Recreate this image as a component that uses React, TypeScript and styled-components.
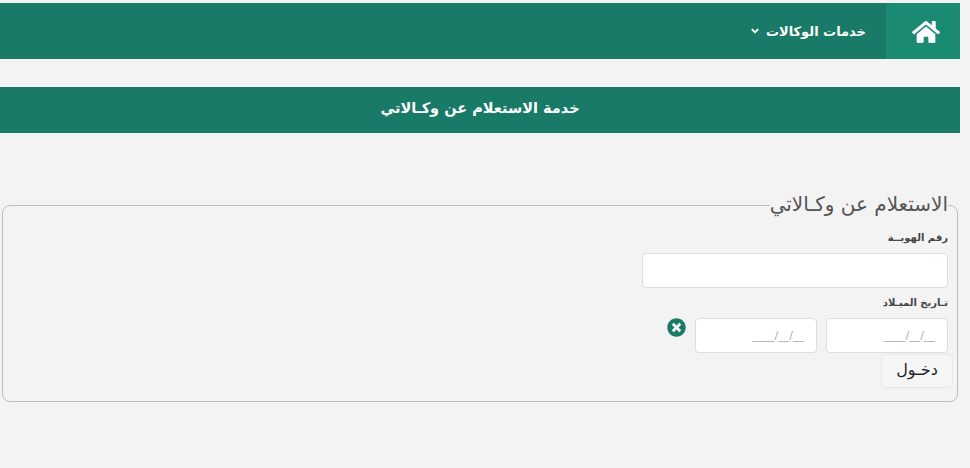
import styled, { createGlobalStyle } from "styled-components";
import { FaAngleDown, FaHome, FaTimesCircle } from "react-icons/fa";

const GlobalStyle = createGlobalStyle`
  html, body {
    margin: 0;
    padding: 0;
    background: #f3f3f3;
  }
  body {
    font-family: "DejaVu Sans", "Noto Sans", sans-serif;
  }
`;

export default function App() {
  return (
    <Page dir="rtl">
      <GlobalStyle />
      <NavBar>
        <HomeLink>
          <FaHome size={28} color="#fff" />
        </HomeLink>
        <MenuItem>
          خدمات الوكالات
          <FaAngleDown size={12} />
        </MenuItem>
      </NavBar>

      <TitleBar>خدمة الاستعلام عن وكـالاتي</TitleBar>

      <Box>
        <BoxTitle>الاستعلام عن وكـالاتي</BoxTitle>

        <FieldLabel>رقم الهويــة</FieldLabel>
        <TextInput $wide />

        <FieldLabel $gap>تـاريخ الميـلاد</FieldLabel>
        <DateRow>
          <TextInput placeholder="__/__/____" />
          <TextInput placeholder="__/__/____" />
          <ClearIcon>
            <FaTimesCircle size={19} />
          </ClearIcon>
        </DateRow>

        <SubmitButton>دخـول</SubmitButton>
      </Box>
    </Page>
  );
}

const Page = styled.div`
  width: 960px;
  height: 465px;
  padding-top: 3px;
`;
const NavBar = styled.div`
  display: flex;
  align-items: stretch;
  height: 56px;
  background: #197a67;
`;
const HomeLink = styled.div`
  display: flex;
  align-items: center;
  justify-content: center;
  box-sizing: border-box;
  width: 74px;
  padding: 2px 0 0 6px;
  background: #1a8a72;
`;
const MenuItem = styled.div`
  display: flex;
  align-items: center;
  gap: 5px;
  padding: 0 20px;
  color: #fff;
  font-size: 13px;
  font-weight: 700;
`;
const TitleBar = styled.div`
  height: 46px;
  margin-top: 28px;
  line-height: 42px;
  background: #197a67;
  color: #fff;
  font-size: 14.5px;
  font-weight: 700;
  text-align: center;
`;
const Box = styled.fieldset`
  box-sizing: border-box;
  height: 208px;
  margin: 61px 2px 0 2px;
  padding: 0 9px;
  border: 1px solid #bdbdbd;
  border-radius: 8px;
  min-width: 0;
`;
const BoxTitle = styled.legend`
  padding: 0 0 2px;
  margin: 0;
  color: #555;
  font-size: 20px;
  line-height: 20px;
`;
const FieldLabel = styled.div<{ $gap?: boolean }>`
  margin-top: ${(p) => (p.$gap ? "7px" : "14px")};
  height: 15px;
  line-height: 15px;
  color: #444;
  font-size: 10px;
  font-weight: 700;
`;
const TextInput = styled.input<{ $wide?: boolean }>`
  display: block;
  box-sizing: border-box;
  width: ${(p) => (p.$wide ? "306px" : "122px")};
  height: 35px;
  margin-top: 8px;
  padding: 0 12px;
  background: #fff;
  border: 1px solid #ddd;
  border-radius: 4px;
  font-family: inherit;
  font-size: 11px;
  &::placeholder {
    color: #aaa;
  }
`;
const DateRow = styled.div`
  display: flex;
  align-items: flex-start;
  gap: 9px;
`;
const ClearIcon = styled.span`
  margin: 8px 0 0 0;
  height: 19px;
  color: #197a67;
`;
const SubmitButton = styled.button`
  display: block;
  width: 72px;
  height: 34px;
  margin: 1px -5px 0 0;
  padding: 0 0 4px;
  background: #f6f6f6;
  border: 1px solid #e8e8e8;
  border-radius: 4px;
  color: #222;
  font-family: inherit;
  font-size: 16px;
`;
